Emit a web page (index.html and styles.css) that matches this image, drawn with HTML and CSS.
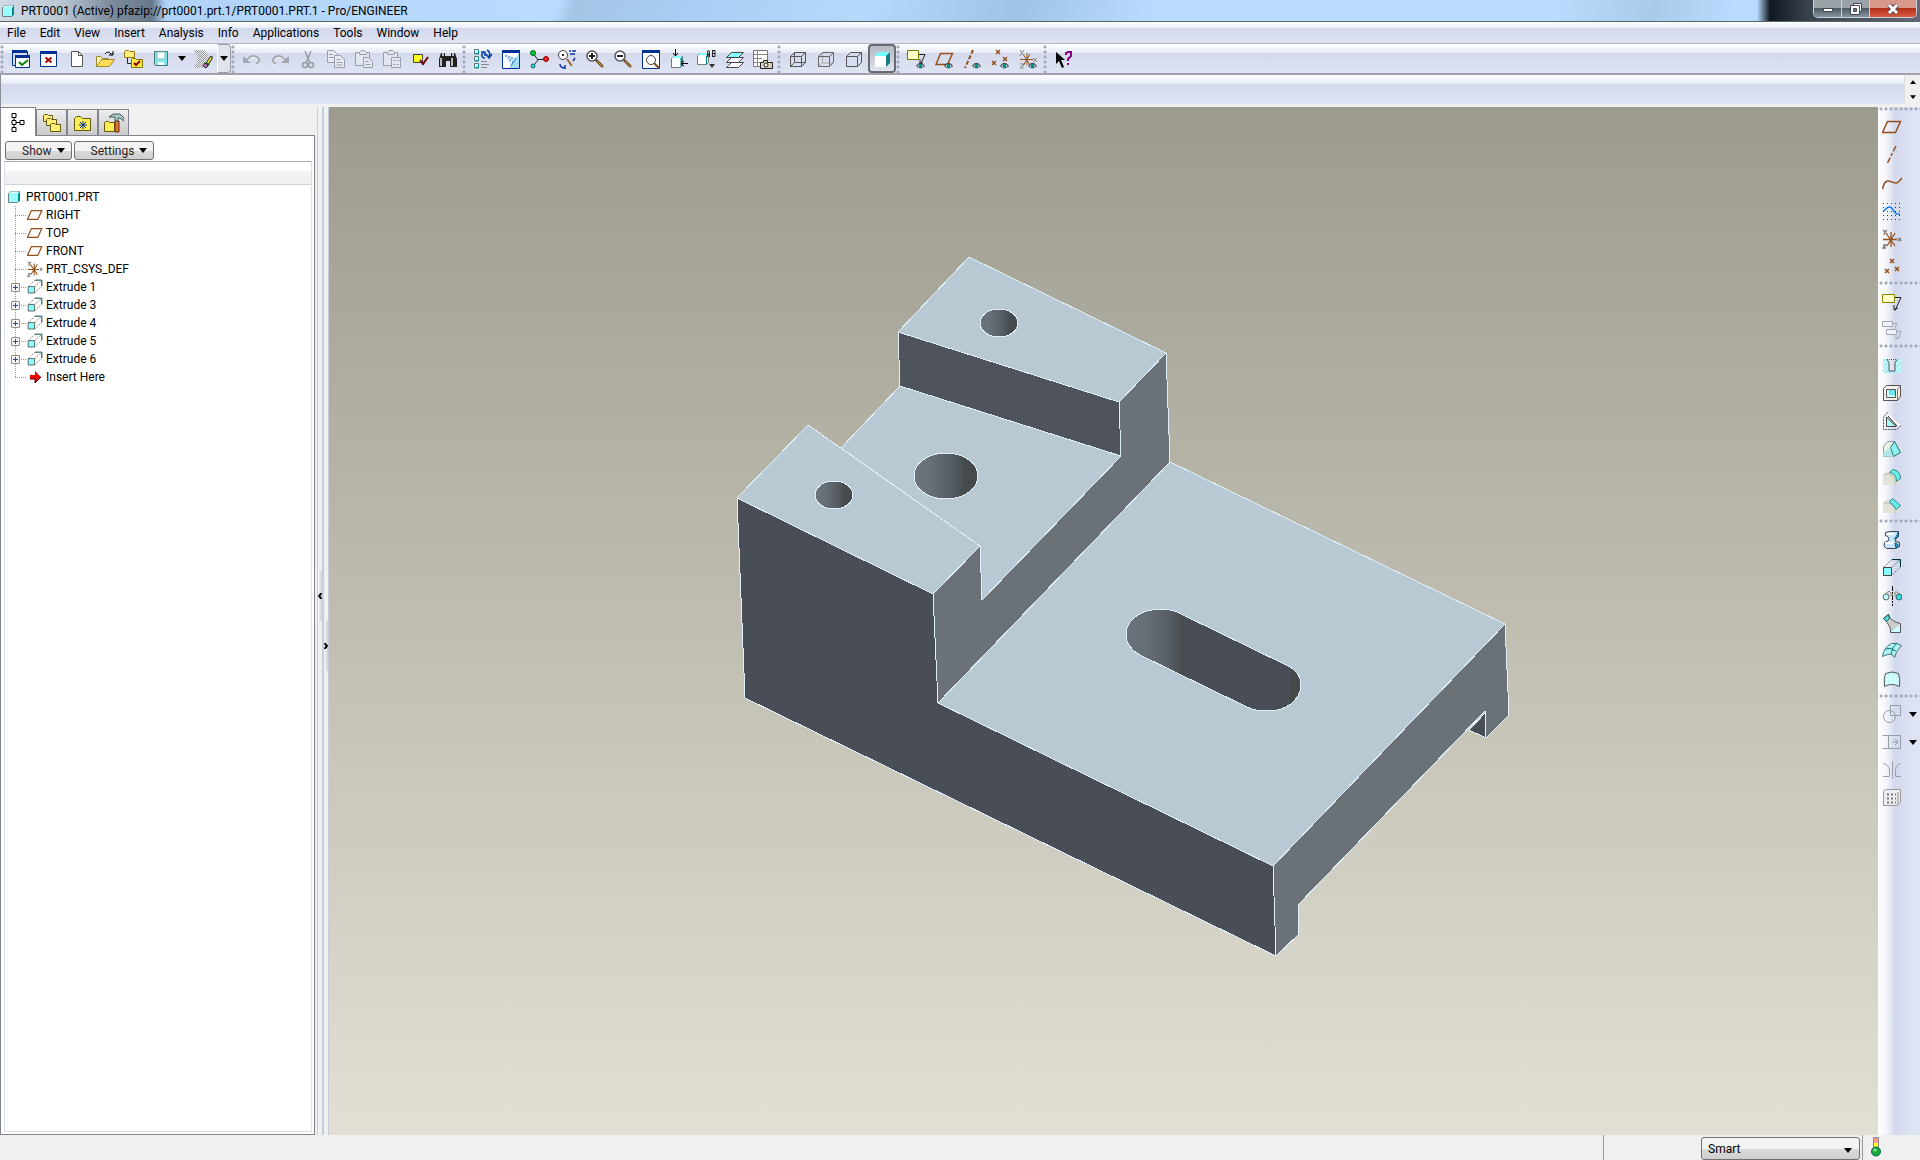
FILE: index.html
```html
<!DOCTYPE html>
<html lang="en">
<head>
<meta charset="utf-8">
<title>PRT0001 (Active) - Pro/ENGINEER</title>
<link rel="stylesheet" href="styles.css">
</head>
<body>
<svg class="sprite" aria-hidden="true">
  <defs>
    <linearGradient id="bore"><stop offset="0" stop-color="#6b747b"/><stop offset=".25" stop-color="#687077"/><stop offset=".6" stop-color="#555b62"/><stop offset=".8" stop-color="#454a4d"/><stop offset="1" stop-color="#45494c"/></linearGradient>
    <linearGradient id="slot"><stop offset="0" stop-color="#6b747b"/><stop offset=".12" stop-color="#666e75"/><stop offset=".25" stop-color="#575d64"/><stop offset=".32" stop-color="#484c50"/><stop offset=".34" stop-color="#494d55"/><stop offset=".93" stop-color="#494d55"/><stop offset=".95" stop-color="#454a4b"/><stop offset="1" stop-color="#45494c"/></linearGradient>
    <pattern id="greydots" width="2" height="2" patternUnits="userSpaceOnUse"><rect width="2" height="2" fill="#eceef6"/><rect width="1" height="1" fill="#999"/><rect x="1" y="1" width="1" height="1" fill="#999"/></pattern>
  </defs>
  <symbol id="part" viewBox="0 0 14 14"><path d="M1.500 3.500l2-2h9v9l-2 2h-9z" fill="#9ff" stroke="#6a8080"/><path d="M11 4v8.500l2-2V2z" fill="#088"/><path d="M2 3h8.500L12 1.500H4z" fill="#dff"/></symbol>
  <symbol id="eye" viewBox="0 0 8 6"><path d="M0 3Q4-2 8 3 4 7 0 3z" fill="#fff" stroke="#555"/><circle cx="4" cy="3" r="2" fill="#088"/><path d="M0 3Q4-2 8 3" fill="none" stroke="#333"/></symbol>
  <symbol id="win-active" viewBox="0 0 20 20"><path d="M1.500 2v14.500H4M2 2.500h14.500V6" fill="none" stroke="#003296"/><path d="M1 1h15v3H1z" fill="#003296"/><path d="M4.500 6.500h14v12h-14z" fill="#fff" stroke="#003296"/><path d="M4 6h15v3H4z" fill="#003296"/><path d="M8 13l3 3 6-5" fill="none" stroke="#080" stroke-width="2"/></symbol>
  <symbol id="win-close" viewBox="0 0 20 20"><path d="M1.500 2.500h16v15h-16z" fill="#fff" stroke="#003296"/><path d="M1 2h17v3H1z" fill="#003296"/><path d="M6.500 8.500l6 5M12.500 8.500l-6 5" stroke="#a00" stroke-width="2"/></symbol>
  <symbol id="new" viewBox="0 0 20 20"><path d="M4.500 2.500h7l4 4v11h-11z" fill="#fff" stroke="#555"/><path d="M11.500 2.500v4h4" fill="none" stroke="#555"/></symbol>
  <symbol id="open" viewBox="0 0 20 20"><path d="M1.500 17.500V7.500h4l2 2h6v2" fill="#ffb" stroke="#a08a30"/><path d="M1.500 17.500l5-7h13l-5 7z" fill="#fd5" stroke="#a08a30"/><path d="M10 5q3-4 6 0l2 0M18 2v4h-4" fill="none" stroke="#000"/></symbol>
  <symbol id="workdir" viewBox="0 0 20 20"><path d="M1.500 8.500v-6l1-1h3l1 1h5v6z" fill="#fe7" stroke="#987a10"/><path d="M4.500 9v5.500H8" fill="none" stroke="#222"/><path d="M8.500 18.500v-8l1-1h3l1 1h6v8z" fill="#fe4" stroke="#86700a"/><path d="M11 14l2 2 4-4" fill="none" stroke="#900" stroke-width="2"/></symbol>
  <symbol id="save" viewBox="0 0 20 20"><path d="M3.500 2.500h13v14h-12l-1-1z" fill="#7ee8ea" stroke="#477"/><path d="M6 3h8v7H6z" fill="#f4ffff" stroke="#8bb"/><path d="M7 13h6v3H7z" fill="#fff"/></symbol>
  <symbol id="erase" viewBox="0 0 20 20"><path d="M1 1h10l5 5-7 13H1l4-9z" fill="url(#greydots)"/><path d="M11 17l6-9 2-1v3l-6 9z" fill="#dd3" stroke="#222"/><path d="M10 17l2-3 3 2-2 3z" fill="#e06ae0" stroke="#222"/><path d="M13 14l3 2" stroke="#151" stroke-width="2"/></symbol>
  <symbol id="undo" viewBox="0 0 20 20"><path d="M5 12q5-7 11-2 3 4-2 6" fill="none" stroke="#fff" stroke-width="2"/><path d="M5 11q5-7 11-2 3 4-2 6" fill="none" stroke="#a2a6b2" stroke-width="2"/><path d="M1 7v7h8z" fill="#a2a6b2"/></symbol>
  <symbol id="redo" viewBox="0 0 20 20"><path d="M15 12q-5-7-11-2-3 4 2 6" fill="none" stroke="#fff" stroke-width="2"/><path d="M15 11q-5-7-11-2-3 4 2 6" fill="none" stroke="#a2a6b2" stroke-width="2"/><path d="M19 7v7h-8z" fill="#a2a6b2"/></symbol>
  <symbol id="cut" viewBox="0 0 20 20"><path d="M7 2l5 12M13 2L8 14" stroke="#999ca5" stroke-width="1.500"/><circle cx="7" cy="16" r="2.500" fill="none" stroke="#999ca5" stroke-width="1.500"/><circle cx="13" cy="16" r="2.500" fill="none" stroke="#999ca5" stroke-width="1.500"/></symbol>
  <symbol id="copy" viewBox="0 0 20 20"><g fill="#e8eaf3" stroke="#9a9da6"><path d="M1.500 1.500h6l4 4v8h-10z"/><path d="M8.500 6.500h6l4 4v8h-10z"/><path d="M3 5.500h4M3 8.500h5M10.500 10.500h4M10.500 13.500h6M10.500 16h6"/></g></symbol>
  <symbol id="paste" viewBox="0 0 20 20"><g fill="#e3e6f1" stroke="#9a9da6"><path d="M1.500 3.500h14v13h-14z"/><path d="M5.500 3.500l2-2h3l2 2v2h-7z"/><path d="M9.500 8.500h5l4 4v6h-9z"/><path d="M11.500 12.500h3M11.500 15.500h5"/></g></symbol>
  <symbol id="paste-special" viewBox="0 0 20 20"><g fill="#e3e6f1" stroke="#9a9da6"><path d="M1.500 3.500h14v13h-14z"/><path d="M5.500 3.500l2-2h3l2 2v2h-7z"/><path d="M9.500 8.500h9v10h-9z"/><path d="M11.500 11.500h2M15 11.500h2M11.500 15.500h2M15 15.500h2"/></g></symbol>
  <symbol id="regen" viewBox="0 0 20 20"><path d="M3.500 5.500h9v8h-9z" fill="#ff2" stroke="#444"/><path d="M10 11l3 4 5-7" fill="none" stroke="#700" stroke-width="2"/></symbol>
  <symbol id="find" viewBox="0 0 20 20"><path d="M3 4h4v3h6V4h4l2 6v8h-7v-6H8v6H1v-8z" fill="#222"/><path d="M3 9v8M14 9v8M5 4v3M15 4v3" stroke="#bbb" stroke-width="2"/></symbol>
  <symbol id="refresh" viewBox="0 0 20 20"><g fill="#dff" stroke="#577"><path d="M1.500.5h4v4h-4zM1.500 7.500h4v4h-4zM1.500 14.500h4v4h-4z"/></g><path d="M5.500 1v4h-4M5.500 8v4h-4M5.500 15v4h-4" fill="none" stroke="#099"/><path d="M8 12.500h6M8 15.500h8M8 18.500h6" stroke="#888"/><path d="M12 9C8 9 8 5 11 3M8 3h4v4M14 1q4 2 2 7M19 5l-3 4-3-4" fill="none" stroke="#0a45a5" stroke-width="1.500"/></symbol>
  <symbol id="repaint" viewBox="0 0 20 20"><path d="M1.500 1.500h17v18h-17z" fill="#fff" stroke="#003296"/><path d="M1 1h18v3H1z" fill="#003296"/><path d="M18 4v15H8z" fill="#a5dcf9"/><path d="M3 5l12 4-5 8z" fill="#cfe9fb"/><path d="M4 7h2M7 8h2M10 9h2M8 11h2M11 13h2" stroke="#2f7cc8"/><path d="M15 9l-5 8" stroke="#2f7cc8"/></symbol>
  <symbol id="spin" viewBox="0 0 20 20"><path d="M4 4l5 7-5 6M9 10.500h8" fill="none" stroke="#222"/><circle cx="4" cy="4" r="2.500" fill="#0c2" stroke="#063"/><circle cx="17" cy="10" r="2.500" fill="#f22" stroke="#800"/><circle cx="4" cy="17" r="2" fill="#3dd" stroke="#066"/></symbol>
  <symbol id="orient" viewBox="0 0 20 20"><circle cx="6" cy="6" r="4.500" fill="#fff" stroke="#444"/><path d="M5 6h2" stroke="#333" stroke-width="2"/><path d="M10 10l5 7" stroke="#a0692f" stroke-width="2"/><path d="M12 2h2M15 2h4M13 5h5M18 9l-2 3M3 15q0 4 5 4M8 16v4" fill="none" stroke="#1133a0" stroke-width="1.500"/></symbol>
  <symbol id="zoomin" viewBox="0 0 20 20"><path d="M11 11l7 7" stroke="#60400f" stroke-width="2.500"/><path d="M12 12l6 6" stroke="#dda055"/><circle cx="7" cy="7" r="5" fill="#fff" stroke="#555" stroke-width="1.500"/><path d="M4 7h6M7 4v6" stroke="#222" stroke-width="2"/></symbol>
  <symbol id="zoomout" viewBox="0 0 20 20"><path d="M11 11l7 7" stroke="#60400f" stroke-width="2.500"/><path d="M12 12l6 6" stroke="#dda055"/><circle cx="7" cy="7" r="5" fill="#fff" stroke="#555" stroke-width="1.500"/><path d="M4 7h6" stroke="#222" stroke-width="2"/></symbol>
  <symbol id="refit" viewBox="0 0 20 20"><path d="M1.500 1.500h17v18h-17z" fill="#fff" stroke="#003296"/><path d="M1 1h18v3H1z" fill="#003296"/><path d="M13 14l5 5" stroke="#754b20" stroke-width="2"/><circle cx="10" cy="11" r="4.500" fill="#fff" stroke="#444"/></symbol>
  <symbol id="reorient" viewBox="0 0 20 20"><path d="M2.500 9.500l2-2h9v9l-2 2h-9z" fill="#fff" stroke="#777"/><path d="M11.500 9.500v9l2-2v-9z" fill="#088"/><path d="M3 9l2-2h8l-1 2z" fill="#8ff"/><path d="M6.500 0v6M4 4l2.500 3L9 4M19 14.500h-6M15 12l-3 2.500 3 2.500" fill="none" stroke="#000"/></symbol>
  <symbol id="saved-views" viewBox="0 0 20 20"><path d="M.5 6.500l2-2h9v9l-2 2h-9z" fill="#fff" stroke="#777"/><path d="M1 6l2-2h8l-1 2z" fill="#8ff"/><path d="M9.500 6.500v9" stroke="#088"/><path d="M10.500 8V3l1-2 1 2v5M10 5.500h3M15.500 1v7M15.500 1.500H18v3h-3M18 4.500v3h-3" fill="none" stroke="#222"/><path d="M12 15h6l-3 4z" fill="#333"/></symbol>
  <symbol id="layers" viewBox="0 0 20 20"><g fill="#fff" stroke="#444"><path d="M1.500 18.500l5-5h12l-5 5z"/><path d="M1.500 13.500l5-5h12l-5 5z"/><path d="M1.500 8.500l5-5h12l-5 5z" fill="#8ff"/></g></symbol>
  <symbol id="viewmgr" viewBox="0 0 20 20"><path d="M.5 1.500h14v16H.5z" fill="#fff" stroke="#777"/><path d="M1 5.500h13M1 9.500h8M1 13.500h7M4.500 2v15" stroke="#888"/><path d="M7.500 13.500h3v-2h4v2h5v6h-12z" fill="#d8d2b8" stroke="#222"/><circle cx="13" cy="16" r="2" fill="#fff" stroke="#222"/></symbol>
  <symbol id="wire" viewBox="0 0 20 20"><path d="M2.500 7.500h11v10h-11zM6.500 3.500h11v10h-11zM2.500 7.500l4-4M13.500 7.500l4-4M2.500 17.500l4-4M13.500 17.500l4-4" fill="none" stroke="#555"/></symbol>
  <symbol id="hidden" viewBox="0 0 20 20"><path d="M6.500 4v10h11M2.500 17.500l4-4" fill="none" stroke="#aaa"/><path d="M2.500 7.500h11v10h-11zM2.500 7.500l4-4h11v10l-4 4M13.500 7.500l4-4" fill="none" stroke="#666"/></symbol>
  <symbol id="nohidden" viewBox="0 0 20 20"><path d="M2.500 7.500h11v10h-11zM2.500 7.500l4-4h11v10l-4 4M13.500 7.500l4-4" fill="none" stroke="#555"/></symbol>
  <symbol id="shaded" viewBox="0 0 20 20"><path d="M3 7h11v11H3z" fill="#fff"/><path d="M3 7l4-4h11l-4 4z" fill="#7ff"/><path d="M14 7l4-4v11l-4 4z" fill="#187c84"/></symbol>
  <symbol id="note-on" viewBox="0 0 20 20"><path d="M.5 1.500h11v9H.5z" fill="#ffc" stroke="#770"/><path d="M12 5.500h6l-4 9M13 10v4h3" fill="none" stroke="#222"/><use href="#eye" x="9" y="14" width="9" height="6"/></symbol>
  <symbol id="plane-on" viewBox="0 0 20 20"><path d="M5.500 4.500h12l-5 11H1z" fill="none" stroke="#955019" stroke-width="1.500"/><use href="#eye" x="9" y="14" width="9" height="6"/></symbol>
  <symbol id="axis-on" viewBox="0 0 20 20"><path d="M10 1L2 19" stroke="#955019" stroke-width="2" stroke-dasharray="4 2"/><use href="#eye" x="9" y="14" width="9" height="6"/></symbol>
  <symbol id="points-on" viewBox="0 0 20 20"><path d="M5 1l4 4M9 1L5 5M1 12l4 4M5 12l-4 4M12 8l4 4M16 8l-4 4" stroke="#955019" stroke-width="1.500"/><use href="#eye" x="9" y="14" width="9" height="6"/></symbol>
  <symbol id="csys-on" viewBox="0 0 20 20"><path d="M1 10.500h13M8 4v12M4 17l7-12M4 5l7 11" stroke="#955019"/><path d="M1 1l2 3 2-3M3 4l-2 3M14 9l4 4M18 9l-4 4M1 15h4l-4 4h4" fill="none" stroke="#888"/><use href="#eye" x="9" y="14" width="9" height="6"/></symbol>
  <symbol id="help" viewBox="0 0 20 20"><path d="M2 3v12l3-3 3 7 2-1-3-7h4z" fill="#000"/><path d="M12 6V4l2-1h3v4l-3 3v2M14 14v2" fill="none" stroke="#808" stroke-width="2"/></symbol>
  <symbol id="plane" viewBox="0 0 20 20"><path d="M5.500 4.500h13l-5 11H.5z" fill="none" stroke="#955019" stroke-width="1.500"/></symbol>
  <symbol id="axis" viewBox="0 0 20 20"><path d="M14 1L5 19" stroke="#955019" stroke-width="1.500" stroke-dasharray="6 2 3 2"/></symbol>
  <symbol id="curve" viewBox="0 0 20 20"><path d="M.5 16C3 5 7 8 10 9s5 3 10-4" fill="none" stroke="#955019" stroke-width="1.500"/></symbol>
  <symbol id="sketch" viewBox="0 0 20 20"><path d="M1 2.500h18M1 6.500h18M1 10.500h18M1 14.500h18M1 18.500h18" stroke="#336" stroke-dasharray="1 3"/><path d="M1 10c3 0 3-5 7-4s4 9 10 7" fill="none" stroke="#1080f0" stroke-width="1.500"/></symbol>
  <symbol id="csys" viewBox="0 0 20 20"><path d="M1 10.500h14M9 3v15M5 17l8-13M4 4l9 13" stroke="#955019" stroke-width="1.300"/><path d="M1 1l2 2 2-2M3 3l-1 3M16 9l3 3M19 9l-3 3M1 16h3l-3 3h3" fill="none" stroke="#777" stroke-width="1.300"/></symbol>
  <symbol id="points" viewBox="0 0 20 20"><path d="M8 2l4 4M12 2L8 6M3 12l4 4M7 12l-4 4M13 10l4 4M17 10l-4 4" stroke="#955019" stroke-width="1.500"/></symbol>
  <symbol id="note" viewBox="0 0 20 20"><path d="M.5 2.500h12v8H.5z" fill="#ffc" stroke="#880"/><path d="M13 5.500h6l-6 13M12 13v5l4-2" fill="none" stroke="#222"/></symbol>
  <symbol id="propagate" viewBox="0 0 20 20"><g fill="#eef1fa" stroke="#a5a8b2"><path d="M.5 1.500h10v5H.5zM4.500 9.500h10v5h-10z"/><path d="M11 3.500h4l-2 5M15 11.500h4l-3 7M14 15v4l4-2" fill="none"/></g></symbol>
  <symbol id="hole" viewBox="0 0 20 20"><path d="M1 4h4l2 3v9h6V7l2-3h4v14H1z" fill="#9ff2f4"/><path d="M1 9l5-4M1 14l6-6M1 18l6-6M14 10l5-5M13 16l6-6M16 18l3-3" stroke="#fff"/><path d="M5 4.500l2 3v8.500h6V7.500l2-3" fill="none" stroke="#555"/><path d="M5 4.500h10" stroke="#555" stroke-dasharray="1 1"/></symbol>
  <symbol id="shell" viewBox="0 0 20 20"><path d="M1.500 5.500l3-3h14v11l-3 4h-14z" fill="#f4f2e8" stroke="#555"/><path d="M4.500 6.500h9v8h-9z" fill="#cff" stroke="#555"/><path d="M7 7h6v5H7z" fill="#6de6e8"/><path d="M15.500 17V6l3-3" fill="none" stroke="#777"/></symbol>
  <symbol id="rib" viewBox="0 0 20 20"><path d="M6 1L1.500 6v12.500H15l4-4" fill="none" stroke="#555" stroke-dasharray="2 1"/><path d="M4.500 6v9.500H14z" fill="#aff" stroke="#444"/><path d="M6 4l10 10 2 0" fill="none" stroke="#fff" stroke-width="2"/><path d="M6 5l9 10" stroke="#222"/></symbol>
  <symbol id="draft" viewBox="0 0 20 20"><path d="M1.500 17.500V7.500l4-5h7l-3 6v9z" fill="#e8f2e8" stroke="#999"/><path d="M8.500 8.500l4-6 6 11-7 4z" fill="#8ef0f0" stroke="#277"/><path d="M1 17.500h10l-3-9-7 6z" fill="#aee8e4"/></symbol>
  <symbol id="round" viewBox="0 0 20 20"><path d="M1 8l4-4h5q8 2 8 9v2l-5 3H1z" fill="#e2e2d8"/><path d="M13 18v-5q-1-4-6-6H2" fill="none" stroke="#bbb"/><path d="M7.500 5.500l3-3q8 1 8 9l-4 3q0-8-7-9z" fill="#6ee" stroke="#388"/></symbol>
  <symbol id="chamfer" viewBox="0 0 20 20"><path d="M1 8l4-4h5l8 9v2l-5 3H1z" fill="#e2e2d8"/><path d="M13 18v-5L8 8H2" fill="none" stroke="#bbb"/><path d="M7.500 6.500l3-3 8 7-4 4z" fill="#6ee" stroke="#388"/></symbol>
  <symbol id="revolve" viewBox="0 0 20 20"><path d="M3.500 2.500l4-1h9v5q-4 2-3 5l4 1v4l-4 2h-9q-4-2-2-6l4-2q1-4-3-5z" fill="#c8e4f8" stroke="#345"/><path d="M16 2v5l-4 2M13 13q6 2 1 5z" fill="#289ad8" stroke="#157"/><path d="M4 4h8M3 13h8" stroke="#fff" stroke-width="2"/></symbol>
  <symbol id="extrude" viewBox="0 0 20 20"><path d="M2 9l8-7.500h8.500V9L10 17M10 9l8-7" fill="none" stroke="#777" stroke-dasharray="2 1"/><path d="M1.500 9.500h8v8h-8z" fill="#8ff" stroke="#444"/><path d="M10 1.500h8.500V9" fill="none" stroke="#033"/><path d="M13 2h5v5l-1-4z" fill="#6bb"/></symbol>
  <symbol id="mirror" viewBox="0 0 20 20"><path d="M3 8l4-3 2 2v3M13 10V6h2l3 2" fill="#ddd" stroke="#888"/><path d="M10.500 0v20" stroke="#111" stroke-dasharray="5 1 2 1"/><circle cx="4" cy="11" r="3" fill="#bff" stroke="#666"/><circle cx="17" cy="11" r="3" fill="#3dd" stroke="#366"/></symbol>
  <symbol id="blend" viewBox="0 0 20 20"><path d="M1.500 4.500l5-4q2 7 12 9v9h-10q1-6-7-14z" fill="#ccc" stroke="#555"/><path d="M1.500 4.500l5-4 1 4-3 3z" fill="#5dd" stroke="#255"/><path d="M9 18l9-8v8z" fill="#cff"/></symbol>
  <symbol id="surface" viewBox="0 0 20 20"><path d="M.5 14.500q1-9 9-13 5-1 10 2-6 6-7 12-2-6-12-1z" fill="#aef6f6" stroke="#477"/><path d="M4 7q4-2 10 2M9 12q1-7 6-11" fill="none" stroke="#166"/></symbol>
  <symbol id="sheet" viewBox="0 0 20 20"><path d="M2.500 16.500q-1-8 1-13 6-3 13 0 2 6 1 13-8-4-15 0z" fill="#c5fafa" stroke="#555"/><path d="M4 6h12M4 9h13M4 12h13" stroke="#fff" stroke-dasharray="2 2"/></symbol>
  <symbol id="merge" viewBox="0 0 20 20"><g fill="none" stroke="#999da8"><circle cx="7.500" cy="12.500" r="6"/><path d="M8.500 1.500h10v10h-10z"/></g></symbol>
  <symbol id="extend" viewBox="0 0 20 20"><path d="M.5 3.500h18v13H.5M6.500 3.500v13M10 10h6M13 7l3 3-3 3" fill="none" stroke="#999da8"/></symbol>
  <symbol id="trim" viewBox="0 0 20 20"><path d="M10.500 1v18M1 3.500q6 1 6.500 7v6M7 16.500H1M19 3.500q-5 1-5.500 7v6M14 16.500h5" fill="none" stroke="#999da8"/></symbol>
  <symbol id="array" viewBox="0 0 20 20"><path d="M1.500 3.500l2-2h15v13l-3 3h-14z" fill="#eceef4" stroke="#999"/><path d="M5 6.500h9M5 10.500h9M5 14.500h9" stroke="#777" stroke-width="2" stroke-dasharray="2 2"/><path d="M16 17V4" stroke="#bbb" stroke-width="2"/></symbol>
  <symbol id="arrow" viewBox="0 0 8 5"><path d="M0 0h8L4 5z"/></symbol>
  <symbol id="tab-tree" viewBox="0 0 20 20"><path d="M6 6v3M6 13v2M8 10.500h5" stroke="#000"/><path d="M4 1.500h4v4H4zM4 8.500h4v4H4zM4 15.500h4v4H4zM12 8.500h4v4h-4z" fill="#fff" stroke="#000"/></symbol>
  <symbol id="tab-folders" viewBox="0 0 20 20"><g fill="#fe7" stroke="#675a10"><path d="M1.500 8.500v-6l1-1h3l1 1h4v6z"/><path d="M4.500 12.500v-6l1-1h3l1 1h5v6z"/><path d="M8.500 18.500v-7l1-1h3l1 1h5v7z"/></g></symbol>
  <symbol id="tab-fav" viewBox="0 0 20 20"><path d="M1.500 17.500v-12l2-2h4l2 2h8v12z" fill="#fe5" stroke="#675a10"/><path d="M10 8v8M6 12h8M7 9l6 6M13 9l-6 6" stroke="#003290"/></symbol>
  <symbol id="tab-tools" viewBox="0 0 20 20"><path d="M.5 18.500v-9l1-1h3l1 1h5v9z" fill="#fe5" stroke="#675a10"/><path d="M11 8h4v11h-4z" fill="#d97d2d" stroke="#722"/><path d="M5 4l4-3h7l4 4v3l-4-3h-2v3h-3V4H5z" fill="#acc" stroke="#455"/></symbol>
  <symbol id="insert" viewBox="0 0 16 16"><path d="M3 6h5V2l6 6-6 6v-4H3z" fill="#e00"/><path d="M3 10h5v4l6-6" fill="none" stroke="#500"/></symbol>
  <symbol id="status-light" viewBox="0 0 10 20"><path d="M2.500.5h5v12h-5z" fill="#f99" stroke="#888"/><path d="M3 6h4v4H3z" fill="#ff2"/><circle cx="5" cy="14.500" r="4.500" fill="#1ba83b" stroke="#064"/><circle cx="4" cy="13" r="1.500" fill="#8e9"/></symbol>
</svg>

<header class="titlebar">
  <svg class="i14"><use href="#part"/></svg>
  <h1 class="caption">PRT0001 (Active) pfazip://prt0001.prt.1/PRT0001.PRT.1 - Pro/ENGINEER</h1>
  <div class="winbtns">
    <button class="winbtn" aria-label="Minimize"><svg width="12" height="12"><path d="M1.500 5.500h9v3h-9z" fill="#fff" stroke="#445"/></svg></button>
    <button class="winbtn" aria-label="Restore"><svg width="12" height="12"><path d="M3.500.5h8v8h-8z" fill="#fff" stroke="#445"/><path d="M.5 2.500h9v9h-9z" fill="#fff" stroke="#445"/><path d="M3.500 5.500h3v3h-3z" fill="#678" stroke="#445"/></svg></button>
    <button class="winbtn close" aria-label="Close"><svg width="12" height="12"><path d="M2 2l8 8M10 2l-8 8" stroke="#545" stroke-width="5"/><path d="M2 2l8 8M10 2l-8 8" stroke="#fff" stroke-width="3"/></svg></button>
  </div>
</header>

<nav class="menubar" aria-label="Main menu">
  <button>File</button><button>Edit</button><button>View</button><button>Insert</button><button>Analysis</button><button>Info</button><button>Applications</button><button>Tools</button><button>Window</button><button>Help</button>
</nav>

<div class="toolbar">
  <div class="group">
    <button aria-label="Activate window"><svg class="i20"><use href="#win-active"/></svg></button>
    <button aria-label="Close window"><svg class="i20"><use href="#win-close"/></svg></button>
    <button aria-label="New"><svg class="i20"><use href="#new"/></svg></button>
    <button aria-label="Open"><svg class="i20"><use href="#open"/></svg></button>
    <button aria-label="Set working directory"><svg class="i20"><use href="#workdir"/></svg></button>
    <button aria-label="Save"><svg class="i20"><use href="#save"/></svg></button>
    <button class="drop" aria-label="Save options"><svg class="caret"><use href="#arrow"/></svg></button>
    <button aria-label="Erase"><svg class="i20"><use href="#erase"/></svg></button>
    <button class="drop framed" aria-label="Erase options"><svg class="caret"><use href="#arrow"/></svg></button>
  </div>
  <div class="group">
    <button aria-label="Undo"><svg class="i20"><use href="#undo"/></svg></button>
    <button aria-label="Redo"><svg class="i20"><use href="#redo"/></svg></button>
    <button aria-label="Cut"><svg class="i20"><use href="#cut"/></svg></button>
    <button aria-label="Copy"><svg class="i20"><use href="#copy"/></svg></button>
    <button aria-label="Paste"><svg class="i20"><use href="#paste"/></svg></button>
    <button aria-label="Paste special"><svg class="i20"><use href="#paste-special"/></svg></button>
    <button aria-label="Regenerate"><svg class="i20"><use href="#regen"/></svg></button>
    <button aria-label="Find"><svg class="i20"><use href="#find"/></svg></button>
  </div>
  <div class="group">
    <button aria-label="Update model tree"><svg class="i20"><use href="#refresh"/></svg></button>
    <button aria-label="Repaint"><svg class="i20"><use href="#repaint"/></svg></button>
    <button aria-label="Spin center"><svg class="i20"><use href="#spin"/></svg></button>
    <button aria-label="Orient mode"><svg class="i20"><use href="#orient"/></svg></button>
    <button aria-label="Zoom in"><svg class="i20"><use href="#zoomin"/></svg></button>
    <button aria-label="Zoom out"><svg class="i20"><use href="#zoomout"/></svg></button>
    <button aria-label="Refit"><svg class="i20"><use href="#refit"/></svg></button>
    <button aria-label="Reorient view"><svg class="i20"><use href="#reorient"/></svg></button>
    <button aria-label="Saved views"><svg class="i20"><use href="#saved-views"/></svg></button>
    <button aria-label="Layers"><svg class="i20"><use href="#layers"/></svg></button>
    <button aria-label="View manager"><svg class="i20"><use href="#viewmgr"/></svg></button>
  </div>
  <div class="group">
    <button aria-label="Wireframe"><svg class="i20"><use href="#wire"/></svg></button>
    <button aria-label="Hidden line"><svg class="i20"><use href="#hidden"/></svg></button>
    <button aria-label="No hidden"><svg class="i20"><use href="#nohidden"/></svg></button>
    <button class="pressed" aria-label="Shading" aria-pressed="true"><svg class="i20"><use href="#shaded"/></svg></button>
  </div>
  <div class="group">
    <button aria-label="Annotations on"><svg class="i20"><use href="#note-on"/></svg></button>
    <button aria-label="Datum planes on"><svg class="i20"><use href="#plane-on"/></svg></button>
    <button aria-label="Datum axes on"><svg class="i20"><use href="#axis-on"/></svg></button>
    <button aria-label="Datum points on"><svg class="i20"><use href="#points-on"/></svg></button>
    <button aria-label="Coordinate systems on"><svg class="i20"><use href="#csys-on"/></svg></button>
  </div>
  <div class="group">
    <button aria-label="Context help"><svg class="i20"><use href="#help"/></svg></button>
  </div>
</div>

<div class="dashboard">
  <div class="dash-area"></div>
  <div class="dash-scroll">
    <button aria-label="Scroll up"><svg class="caret up"><use href="#arrow"/></svg></button>
    <button aria-label="Scroll down"><svg class="caret"><use href="#arrow"/></svg></button>
  </div>
</div>

<div class="workspace">
  <aside class="navigator">
    <div class="tabs" role="tablist">
      <button class="tab active" role="tab" aria-label="Model tree"><svg class="i20"><use href="#tab-tree"/></svg></button>
      <button class="tab" role="tab" aria-label="Folder browser"><svg class="i20"><use href="#tab-folders"/></svg></button>
      <button class="tab" role="tab" aria-label="Favorites"><svg class="i20"><use href="#tab-fav"/></svg></button>
      <button class="tab" role="tab" aria-label="Connections"><svg class="i20"><use href="#tab-tools"/></svg></button>
    </div>
    <div class="panel">
      <div class="panel-buttons">
        <button class="push">Show<svg class="caret"><use href="#arrow"/></svg></button>
        <button class="push">Settings<svg class="caret"><use href="#arrow"/></svg></button>
      </div>
      <div class="tree-frame">
        <div class="tree-head"></div>
        <div class="tree-root"><svg class="i14"><use href="#part"/></svg>PRT0001.PRT</div>
        <ul class="tree">
          <li><svg class="i16"><use href="#plane"/></svg>RIGHT</li>
          <li><svg class="i16"><use href="#plane"/></svg>TOP</li>
          <li><svg class="i16"><use href="#plane"/></svg>FRONT</li>
          <li><svg class="i16"><use href="#csys"/></svg>PRT_CSYS_DEF</li>
          <li><button class="expand" aria-label="Expand Extrude 1"></button><svg class="i16"><use href="#extrude"/></svg>Extrude 1</li>
          <li><button class="expand" aria-label="Expand Extrude 3"></button><svg class="i16"><use href="#extrude"/></svg>Extrude 3</li>
          <li><button class="expand" aria-label="Expand Extrude 4"></button><svg class="i16"><use href="#extrude"/></svg>Extrude 4</li>
          <li><button class="expand" aria-label="Expand Extrude 5"></button><svg class="i16"><use href="#extrude"/></svg>Extrude 5</li>
          <li><button class="expand" aria-label="Expand Extrude 6"></button><svg class="i16"><use href="#extrude"/></svg>Extrude 6</li>
          <li><svg class="i16"><use href="#insert"/></svg>Insert Here</li>
        </ul>
      </div>
    </div>
  </aside>

  <div class="splitter">
    <div class="rail"><button class="handle first" aria-label="Collapse navigator"><svg width="4" height="6"><path d="M3.500 0L1 3l2.500 3" fill="none" stroke="#000" stroke-width="2"/></svg></button></div>
    <div class="rail"><button class="handle second" aria-label="Expand browser"><svg width="4" height="6"><path d="M.5 0L3 3 .5 6" fill="none" stroke="#000" stroke-width="2"/></svg></button></div>
  </div>

  <main class="viewport">
    <svg class="model" viewBox="329 107 1549 1028" role="img" aria-label="Shaded part model">
      <g stroke="#dff0fb" stroke-width="1" stroke-linejoin="round" shape-rendering="crispEdges">
        <path d="M1469 730L1486 712V738z" fill="#494d55"/>
        <path d="M841 448L900 386 1121 456 982 600 980 546z" fill="#b8c9d3"/>
        <path d="M898 332L1119 402 1121 456 900 386z" fill="#4f535b"/>
        <path d="M969 257L1166 353 1119 402 898 332z" fill="#b8c9d3"/>
        <path d="M1119 402L1166 353 1170 462 938 703 933 594 980 546 982 600 1121 456z" fill="#6a7177"/>
        <path d="M808 425L980 546 933 594 737 498z" fill="#b8c9d3"/>
        <path d="M737 498L933 594 938 703 1273 866 1276 956 745 698z" fill="#494d55"/>
        <path d="M1170 462L1505 624 1273 866 938 703z" fill="#b8c9d3"/>
        <path d="M1505 624L1509 715 1486 738 1485 711 1298 905 1299 934 1276 956 1273 866z" fill="#6a7177"/>
        <ellipse cx="999" cy="323" rx="19" ry="14" fill="url(#bore)"/>
        <ellipse cx="946" cy="476" rx="32" ry="23" fill="url(#bore)"/>
        <ellipse cx="834" cy="495" rx="19" ry="14" fill="url(#bore)"/>
        <path d="M1126 635C1126 618 1143 609 1162 609Q1173 609 1183 615L1284 664C1296 669 1301 677 1301 685 1300 701 1286 711 1267 711Q1255 711 1247 707L1140 655Q1126 647 1126 635z" fill="url(#slot)"/>
      </g>
    </svg>
  </main>

  <div class="featurebar">
    <div class="vgroup">
      <button aria-label="Datum plane"><svg class="i20"><use href="#plane"/></svg></button>
      <button aria-label="Datum axis"><svg class="i20"><use href="#axis"/></svg></button>
      <button aria-label="Datum curve"><svg class="i20"><use href="#curve"/></svg></button>
      <button aria-label="Sketch"><svg class="i20"><use href="#sketch"/></svg></button>
      <button aria-label="Coordinate system"><svg class="i20"><use href="#csys"/></svg></button>
      <button aria-label="Datum point"><svg class="i20"><use href="#points"/></svg></button>
    </div>
    <div class="vgroup">
      <button aria-label="Annotation feature"><svg class="i20"><use href="#note"/></svg></button>
      <button aria-label="Propagate annotations"><svg class="i20"><use href="#propagate"/></svg></button>
    </div>
    <div class="vgroup">
      <button aria-label="Hole"><svg class="i20"><use href="#hole"/></svg></button>
      <button aria-label="Shell"><svg class="i20"><use href="#shell"/></svg></button>
      <button aria-label="Rib"><svg class="i20"><use href="#rib"/></svg></button>
      <button aria-label="Draft"><svg class="i20"><use href="#draft"/></svg></button>
      <button aria-label="Round"><svg class="i20"><use href="#round"/></svg></button>
      <button aria-label="Chamfer"><svg class="i20"><use href="#chamfer"/></svg></button>
    </div>
    <div class="vgroup">
      <button aria-label="Revolve"><svg class="i20"><use href="#revolve"/></svg></button>
      <button aria-label="Extrude"><svg class="i20"><use href="#extrude"/></svg></button>
      <button aria-label="Mirror"><svg class="i20"><use href="#mirror"/></svg></button>
      <button aria-label="Swept blend"><svg class="i20"><use href="#blend"/></svg></button>
      <button aria-label="Boundary blend"><svg class="i20"><use href="#surface"/></svg></button>
      <button aria-label="Style"><svg class="i20"><use href="#sheet"/></svg></button>
    </div>
    <div class="vgroup">
      <div class="pair"><button aria-label="Merge"><svg class="i20"><use href="#merge"/></svg></button><button class="drop" aria-label="Merge options"><svg class="caret"><use href="#arrow"/></svg></button></div>
      <div class="pair"><button aria-label="Extend"><svg class="i20"><use href="#extend"/></svg></button><button class="drop" aria-label="Extend options"><svg class="caret"><use href="#arrow"/></svg></button></div>
      <button aria-label="Trim"><svg class="i20"><use href="#trim"/></svg></button>
      <button aria-label="Pattern"><svg class="i20"><use href="#array"/></svg></button>
    </div>
  </div>
</div>

<footer class="statusbar">
  <div class="filter">
    <span class="select-wrap"><select aria-label="Selection filter"><option>Smart</option></select><svg class="caret"><use href="#arrow"/></svg></span>
  </div>
  <div class="light"><svg width="10" height="20"><use href="#status-light"/></svg></div>
</footer>
</body>
</html>
```
FILE: styles.css
```css
* { box-sizing: border-box; }
body {
  margin: 0;
  min-height: 100vh;
  display: flex;
  flex-direction: column;
  background: #f0f0f0;
  color: #000;
  font: 12px/18px Roboto, "Open Sans", sans-serif;
}
button {
  margin: 0;
  padding: 0;
  border: 0;
  background: none;
  color: inherit;
  font: inherit;
  display: flex;
  align-items: center;
  justify-content: center;
}
svg { display: block; flex: none; }
.sprite { position: absolute; width: 0; height: 0; }
.i20 { width: 20px; height: 20px; }
.i14 { width: 14px; height: 14px; }
.i16 { width: 16px; height: 16px; }
.caret { width: 8px; height: 5px; }
.up { transform: rotate(180deg); }

.titlebar {
  display: flex;
  align-items: flex-start;
  gap: 6px;
  height: 22px;
  padding-left: 1px;
  border-bottom: 1px solid #566;
  background:
    linear-gradient(90deg, rgba(212,220,228,.9) 0, rgba(190,200,210,.9) 60px, rgba(120,132,146,.9) 110px, rgba(98,112,130,.9) 152px, rgba(160,195,230,0) 166px),
    linear-gradient(90deg, transparent calc(100% - 163px), #101820 calc(100% - 150px), #3a4450 calc(100% - 110px), #667 100%),
    linear-gradient(110deg, #a9cdf2 0, #b8dafc 23%, #b9dbfd 29%, #a3c5e6 30%, #a9cef3 36%, #b5d9fc 45%, #9fc3e4 53%, #b9dcfe 60%, #b9dcfe 72%, #b9dcfe 81%, #a8cbea 86%, #b9dcfe 90%);
}
.titlebar > .i14 { margin-top: 4px; }
.caption { flex: 1; margin: 0; font-size: 12px; line-height: 22px; font-weight: 400; white-space: nowrap; }
.winbtns {
  display: flex;
  margin-right: 3px;
  border: 1px solid #c8d0d8;
  border-top: 0;
  border-radius: 0 0 5px 5px;
  overflow: hidden;
}
.winbtn { width: 28px; height: 17px; background: linear-gradient(#9aa2a8 0 45%, #4e5a64 50%, #8495a2); border-right: 1px solid #c8d0d8; }
.winbtn.close { width: 46px; background: linear-gradient(#d9988a 0 45%, #b5301a 50%, #d85c40); border-right: 0; }

.menubar, .toolbar, .dash-area { background: linear-gradient(#fff 0, #e7ebf6 30%, #d3d9ec 31%, #dfe4f4 100%); }
.menubar { display: flex; height: 22px; border-bottom: 1px solid #b4b7c4; }
.menubar button { padding: 1px 7px 0; }

.toolbar { display: flex; height: 31px; border-bottom: 2px solid #9fa2ad; }
.group {
  display: flex;
  padding-left: 7px;
  background: radial-gradient(circle at 2px 3px, #a5a9b8 1px, transparent 2px) 0 0 / 5px 5px repeat-y;
}
.group button { width: 28px; height: 29px; }
.vgroup button { width: 28px; height: 28px; }
.group .drop, .vgroup .drop { width: 14px; }
.group .framed { border: 1px solid #999ca6; border-left-color: #fff; border-radius: 0 4px 4px 0; background: #e2e4ec; }
.group .pressed { border: 2px solid #666a72; border-radius: 4px; background: linear-gradient(#b4b8c2, #e2e5ee); }

.dashboard { display: flex; height: 32px; padding-bottom: 3px; border-left: 1px solid #8c8f98; }
.dash-area { flex: 1; }
.dash-scroll { width: 16px; display: flex; flex-direction: column; border-left: 1px solid #ddd; }
.dash-scroll button { flex: 1; }
.dash-scroll .caret { width: 6px; height: 4px; }

.workspace { flex: 1; display: flex; }
.navigator { width: 315px; display: flex; flex-direction: column; }
.tabs { display: flex; align-items: flex-end; height: 29px; box-shadow: inset 0 -1px #82858f; }
.tab { width: 31px; height: 27px; border: 1px solid #82858f; border-bottom: 0; background: linear-gradient(#eee, #c8c8c8); box-shadow: inset 0 -1px #82858f; }
.tab.active { width: 36px; height: 29px; background: #fff; box-shadow: none; }
.panel { flex: 1; display: flex; flex-direction: column; padding: 5px 2px 2px 3px; background: #fff; border: 1px solid #82858f; border-top: 0; }
.panel-buttons { display: flex; gap: 2px; padding: 0 0 1px 1px; }
.push { height: 19px; gap: 5px; padding: 0 6px 0 16px; border: 1px solid #707070; border-radius: 3px; background: linear-gradient(#f3f3f3 50%, #dadada 51%, #cfcfcf); color: #2b1a20; }
.tree-frame { flex: 1; border: 1px solid #dcdee8; border-top-color: #aaa; }
.tree-head { height: 23px; margin-bottom: 3px; background: linear-gradient(#fff 40%, #f3f4f5 41%, #eeeff1); border-bottom: 1px solid #cfd1dc; }
.tree-root { display: flex; align-items: center; height: 18px; gap: 5px; padding-left: 2px; }
.tree { margin: 0 0 0 10px; padding: 0; list-style: none; }
.tree li {
  position: relative;
  display: flex;
  align-items: center;
  height: 18px;
  gap: 3px;
  padding-left: 12px;
  background:
    repeating-linear-gradient(#999 0 1px, transparent 1px 2px) 0 0 / 1px 100% no-repeat,
    repeating-linear-gradient(90deg, #999 0 1px, transparent 1px 2px) 0 9px / 12px 1px no-repeat;
}
.tree li:last-child { background-size: 1px 10px, 12px 1px; }
.expand {
  position: absolute;
  left: -4px;
  top: 5px;
  width: 9px;
  height: 9px;
  border: 1px solid #8e8f8f;
  border-radius: 1px;
  background:
    linear-gradient(#2b4a90, #2b4a90) center / 5px 1px no-repeat,
    linear-gradient(#2b4a90, #2b4a90) center / 1px 5px no-repeat,
    #f4f4f4;
}

.splitter { display: flex; width: 14px; padding-left: 2px; }
.rail { width: 6px; border-left: 1px solid #c6cfe0; border-right: 1px solid #c0cedc; display: flex; flex-direction: column; justify-content: center; }
.handle { height: 50px; background: linear-gradient(90deg, #f8f8f8, #d0d0d4); }
.first { margin-bottom: 50px; }
.second { margin-top: 50px; }

.viewport { flex: 1; min-width: 0; display: flex; background: linear-gradient(#9d9b8d, #e2e0d4); }
.model { flex: 1; min-width: 0; }

.featurebar { width: 42px; background: linear-gradient(90deg, #fff 0, #f4f6fb 8px, #d3d9ec 17px, #dfe4f4 36px, #dfe4f4 100%); }
.vgroup {
  padding-top: 7px;
  background: radial-gradient(circle at 3px 2px, #a5a9b8 1px, transparent 2px) 0 0 / 5px 5px repeat-x;
}
.vgroup:first-child, .vgroup:last-child { padding-top: 6px; }
.pair { display: flex; }

.statusbar { display: flex; justify-content: flex-end; height: 25px; }
.filter { width: 260px; display: flex; justify-content: flex-end; padding: 2px 2px 0 0; border-left: 1px solid #999; border-right: 1px solid #999; }
.select-wrap { position: relative; width: 159px; }
.select-wrap select { width: 100%; height: 23px; padding: 0 6px; appearance: none; border: 1px solid #707070; border-radius: 3px; background: linear-gradient(#f3f3f3 50%, #dadada 51%, #cfcfcf); font: inherit; color: #000; }
.select-wrap .caret { position: absolute; right: 8px; top: 11px; }
.light { width: 57px; padding: 2px 0 0 8px; }
```
